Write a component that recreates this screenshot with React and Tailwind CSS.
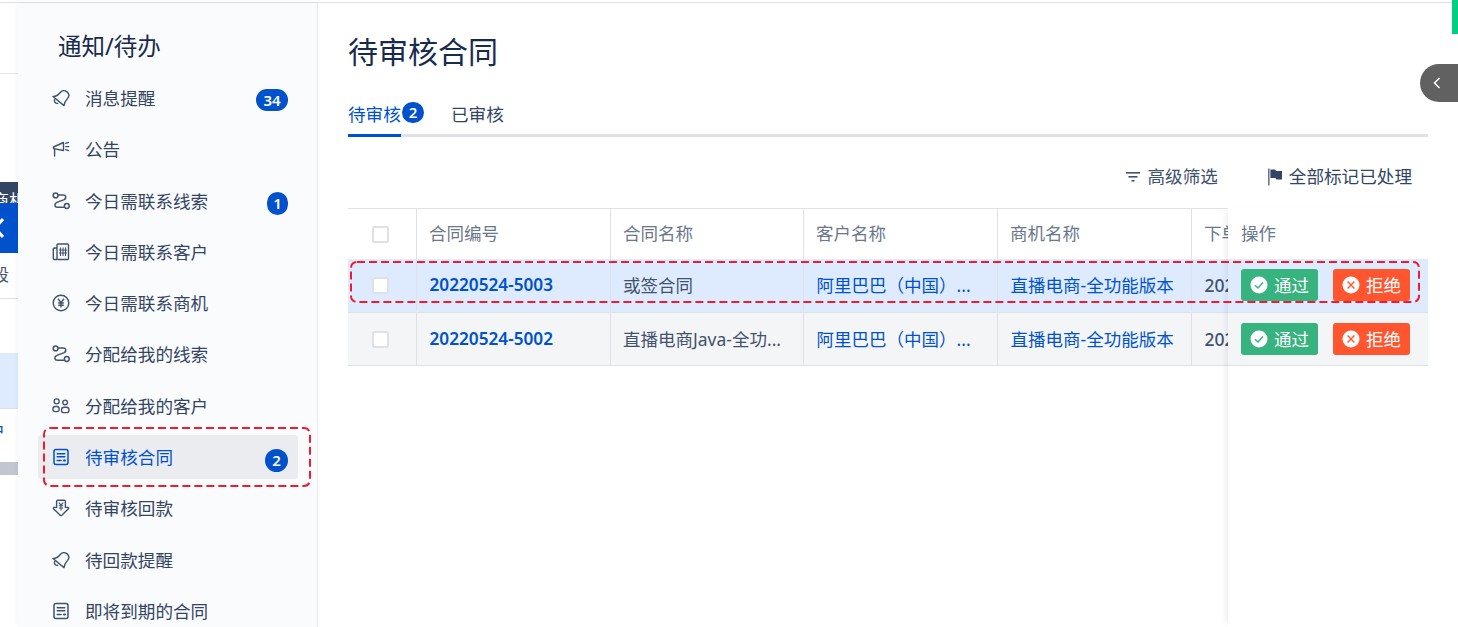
import React from 'react';

const FONT = "font-['Noto_Sans','Noto_Sans_CJK_SC',sans-serif]";

// Sidebar icons are drawn to match the reference's thin-line set
const BellIcon = ({ className }) => (
  <svg viewBox="0 0 18 18" className={className} fill="none" stroke="currentColor" strokeWidth="1.4" strokeLinejoin="round" strokeLinecap="round">
    <path d="M1 7.5 C3.5 7.6 6 6.4 8 3.8 C9.6 1.6 12.6 1 14.8 2.6 C17 4.4 17.4 7.2 15.6 9.4 C13.6 11.6 12.2 13.6 12 16.6 Z" />
    <path d="M2.6 10.4 C1.8 12.6 3.2 14.6 5.8 14.4" />
  </svg>
);

const MegaphoneIcon = ({ className }) => (
  <svg viewBox="0 0 18 18" className={className} fill="none" stroke="currentColor" strokeWidth="1.4" strokeLinecap="round" strokeLinejoin="round">
    <path d="M1.5 7 L11.5 2.5 V10.5 L1.5 8.6 Z" />
    <path d="M2.6 9 V16" />
    <path d="M13.8 3.4 L16.4 2.4 M13.8 6.6 H16.8 M13.8 9.6 L16.4 10.6" />
  </svg>
);

const RouteIcon = ({ className }) => (
  <svg viewBox="0 0 18 18" className={className} fill="none" stroke="currentColor" strokeWidth="1.5">
    <circle cx="3.6" cy="3.4" r="2.4" />
    <circle cx="14.8" cy="14" r="2.4" />
    <path d="M6 3 H11 C14.2 3 14.8 6 12.2 7.6 L4.8 10.4 C2 11.8 2.4 15.2 5.6 15.2 H12.4" />
  </svg>
);

const BuildingIcon = ({ className }) => (
  <svg viewBox="0 0 18 18" className={className} fill="none" stroke="currentColor" strokeWidth="1.4">
    <rect x="5" y="1" width="11.5" height="15.5" rx="1" />
    <path d="M5 5 H2.5 C1.8 5 1.3 5.5 1.3 6.2 V15.3 C1.3 16 1.8 16.5 2.5 16.5 H5" />
    <path d="M8.5 4.5 V13 M11 4.5 V13 M13.5 4.5 V13 M7 7 H15 M7 10 H15" strokeWidth="1.1" />
  </svg>
);

const YenCircleIcon = ({ className }) => (
  <svg viewBox="0 0 18 18" className={className} fill="none" stroke="currentColor" strokeWidth="1.4">
    <circle cx="9" cy="9" r="7.8" />
    <path d="M6 4.8 L9 8.6 L12 4.8 M9 8.6 V13.5 M6.2 9 H11.8 M6.2 11.2 H11.8" />
  </svg>
);

const UsersIcon = ({ className }) => (
  <svg viewBox="0 0 20 18" className={className} fill="none" stroke="currentColor" strokeWidth="1.5">
    <circle cx="5.2" cy="3.8" r="2.8" />
    <circle cx="14.6" cy="5" r="2.6" />
    <rect x="1" y="9.6" width="7" height="5.6" rx="2.6" />
    <rect x="10.6" y="10.4" width="8.2" height="6" rx="2.8" />
  </svg>
);

const DocIcon = ({ className }) => (
  <svg viewBox="0 0 18 18" className={className} fill="none" stroke="currentColor" strokeWidth="1.5" strokeLinecap="round">
    <rect x="2" y="1.6" width="14" height="14.8" rx="2" />
    <path d="M5.2 5.8 H12.8 M5.2 8.8 H12.8 M5.2 12.4 H9" />
    <path d="M12 12.4 H13" strokeWidth="2" />
  </svg>
);

const YenDownIcon = ({ className }) => (
  <svg viewBox="0 0 18 18" className={className} fill="none" stroke="currentColor" strokeWidth="1.4" strokeLinejoin="round">
    <path d="M4.6 8.4 V2.6 C4.6 1.8 5.2 1.2 6 1.2 H12 C12.8 1.2 13.4 1.8 13.4 2.6 V8.4 H16 C16.8 8.4 17 9.2 16.4 9.8 L9.8 16.2 C9.3 16.7 8.7 16.7 8.2 16.2 L1.6 9.8 C1 9.2 1.2 8.4 2 8.4 Z" />
    <path d="M6.8 3.6 L9 6.2 L11.2 3.6 M9 6.2 V11.6 M6.8 6.8 H11.2 M6.8 9 H11.2" strokeWidth="1.1" />
  </svg>
);

const FilterIcon = () => (
  <svg viewBox="0 0 16 12" className="w-4 h-3 text-[#42526e]" fill="currentColor">
    <rect x="1" y="1" width="14" height="1.6" />
    <rect x="3.5" y="5" width="9" height="1.6" />
    <rect x="6.5" y="9" width="3" height="1.6" />
  </svg>
);

const FlagIcon = () => (
  <svg viewBox="0 0 16 18" className="w-4 h-[18px] text-[#344563]" fill="currentColor">
    <rect x="1" y="0.5" width="1.6" height="17" fill="#6b778c" />
    <path d="M3.4 1.5 H8 L9 3 H15 V11.5 H9.5 L8.5 10 H3.4 Z" />
  </svg>
);

const CheckBadge = () => (
  <svg viewBox="0 0 18 18" className="w-[18px] h-[18px] shrink-0">
    <circle cx="9" cy="9" r="8.5" fill="#fff" />
    <path d="M5 9.2 L8 12 L13 6.6" fill="none" stroke="#36b37e" strokeWidth="1.4" />
  </svg>
);

const CrossBadge = () => (
  <svg viewBox="0 0 18 18" className="w-[18px] h-[18px] shrink-0">
    <circle cx="9" cy="9" r="8.5" fill="#fff" />
    <path d="M5.6 5.6 L12.4 12.4 M12.4 5.6 L5.6 12.4" fill="none" stroke="#ff5630" strokeWidth="1.4" />
  </svg>
);

const Count = ({ value, className = '' }) => (
  <span className={`flex items-center justify-center rounded-full bg-[#0052cc] text-white font-semibold text-[15px] leading-none ${className}`}>
    {value}
  </span>
);

const menuItems = [
  { label: '消息提醒', Icon: BellIcon, badge: '34', badgeSize: 'w-[32px] h-[22px] mt-[4px]' },
  { label: '公告', Icon: MegaphoneIcon },
  { label: '今日需联系线索', Icon: RouteIcon, badge: '1', badgeSize: 'w-[21px] h-[23px] mt-[5px]' },
  { label: '今日需联系客户', Icon: BuildingIcon },
  { label: '今日需联系商机', Icon: YenCircleIcon },
  { label: '分配给我的线索', Icon: RouteIcon },
  { label: '分配给我的客户', Icon: UsersIcon },
  { label: '待审核合同', Icon: DocIcon, badge: '2', badgeSize: 'w-[23px] h-[23px] mt-[7px]', active: true },
  { label: '待审核回款', Icon: YenDownIcon },
  { label: '待回款提醒', Icon: BellIcon },
  { label: '即将到期的合同', Icon: DocIcon },
];

const rows = [
  { no: '20220524-5003', name: '或签合同', customer: '阿里巴巴（中国）...', biz: '直播电商-全功能版本', bg: 'bg-[#deebff]', h: 'h-[54px] pb-px' },
  { no: '20220524-5002', name: '直播电商Java-全功...', customer: '阿里巴巴（中国）...', biz: '直播电商-全功能版本', bg: 'bg-[#f4f5f7]', h: 'h-[53px]' },
];

const headers = ['合同编号', '合同名称', '客户名称', '商机名称', '下单时间'];
const widths = ['w-[194px]', 'w-[193px]', 'w-[194px]', 'w-[194px]', 'w-[200px]'];

const Checkbox = () => (
  <span className="block w-[17px] h-[17px] rounded-[2px] border-2 border-[#dfe1e6] bg-white" />
);

const DashedBox = ({ className, w, h }) => (
  <svg className={`absolute ${className}`} width={w} height={h} fill="none">
    <rect x="1" y="1" width={w - 2} height={h - 2} rx="6" stroke="#ee1c2e" strokeWidth="2" strokeDasharray="8 4" />
  </svg>
);

const LeftPeek = () => (
  <div className="w-[18px] shrink-0 h-full flex flex-col bg-white overflow-hidden">
    <div className="h-[71px] border-b border-[#e5e6eb] shrink-0" />
    <div className="h-[108px] shrink-0" />
    <div className="h-[21px] bg-[#344563] shrink-0 text-white text-[17px] leading-[38px] -indent-2 whitespace-nowrap overflow-hidden">商机</div>
    <div className="h-[50px] bg-[#0052cc] shrink-0 flex items-center">
      <svg viewBox="0 0 11 20" className="w-[11px] h-5 text-white -ml-[7px] shrink-0" fill="none" stroke="currentColor" strokeWidth="3">
        <path d="M10 1 L2 10 L10 19" />
      </svg>
    </div>
    <div className="h-[46px] shrink-0 border-b border-[#dfe1e6] text-[#42526e] text-[17px] leading-[44px] -indent-2">段</div>
    <div className="h-[54px] shrink-0" />
    <div className="h-[56px] bg-[#deebff] border-b border-[#dfe1e6] shrink-0" />
    <div className="h-[53px] shrink-0 text-[#0052cc] text-[17px] leading-[46px] -indent-3">户</div>
    <div className="h-[13px] bg-[#c1c7d0] shrink-0" />
  </div>
);

const Sidebar = () => (
  <aside className="w-[300px] shrink-0 h-full bg-[#fafbfd] border-r border-[#ebecf0] shadow-[0_0_6px_rgba(9,30,66,0.06)] overflow-hidden">
    <h2 className="pl-[40px] pt-[26px] h-[73px] text-[23.5px] leading-[34px] text-[#172b4d]">通知/待办</h2>
    <ul className="pl-[20px] pr-[19px] flex flex-col gap-[7.3px]">
      {menuItems.map(({ label, Icon, badge, badgeSize, active }) => (
        <li
          key={label}
          className={`h-[44px] shrink-0 flex items-center pl-[14px] pr-[10px] rounded-[4px] ${active ? 'bg-[#ebecf0] text-[#0052cc]' : 'text-[#344563]'}`}
        >
          <Icon className={`w-[18px] h-[18px] shrink-0 ${active ? 'text-[#0052cc]' : 'text-[#42526e]'}`} />
          <span className="ml-[15px] flex-1 text-[17.6px] leading-6 whitespace-nowrap">{label}</span>
          {badge && <Count value={badge} className={badgeSize} />}
        </li>
      ))}
    </ul>
  </aside>
);

const ActionColumn = () => (
  <div className="absolute top-[205px] right-[30px] bottom-0 w-[200px] bg-white shadow-[-6px_0_6px_-4px_rgba(9,30,66,0.08)]">
    <div className="h-[51px] flex items-center pl-[13px] text-[17.5px] text-[#6b778c]">操作</div>
    {rows.map((row) => (
      <div key={row.no} className={`${row.h} ${row.bg} border-b border-[#dfe1e6] flex items-center gap-[15px] pl-[13px]`}>
        <button className="h-8 w-[77px] rounded-[3px] bg-[#36b37e] text-white text-[17.5px] flex items-center justify-center gap-[6px]">
          <CheckBadge />通过
        </button>
        <button className="h-8 w-[77px] rounded-[3px] bg-[#ff5630] text-white text-[17.5px] flex items-center justify-center gap-[6px]">
          <CrossBadge />拒绝
        </button>
      </div>
    ))}
  </div>
);

const Main = () => (
  <main className="relative flex-1 h-full pl-[30px] pr-[30px] overflow-hidden bg-white">
    <h1 className="pt-[27px] h-[86px] text-[30px] leading-[44px] text-[#172b4d]">待审核合同</h1>

    <div className="flex h-[48px] border-b-[3px] border-[#dfe1e6] text-[17.6px]">
      <div className="relative h-[48px] w-[53px] border-b-[3px] border-[#0052cc] text-[#0052cc] leading-[50px] whitespace-nowrap">
        待审核
        <Count value="2" className="absolute left-[54px] top-[13px] w-[22px] h-[21px]" />
      </div>
      <div className="ml-[50px] text-[#344563] leading-[50px]">已审核</div>
    </div>

    <div className="h-[71px] pt-[8px] flex items-center justify-end pr-[16px] text-[17.6px] text-[#42526e]">
      <FilterIcon />
      <span className="ml-[6px]">高级筛选</span>
      <span className="ml-[49px]"><FlagIcon /></span>
      <span className="ml-[6px] text-[#344563]">全部标记已处理</span>
    </div>

    <div className="border-t border-[#dfe1e6] overflow-hidden">
      <div className="flex h-[50px] text-[17.5px] text-[#6b778c]">
        <div className="w-[69px] shrink-0 flex items-center justify-center border-r border-[#dfe1e6] pr-[4px]"><Checkbox /></div>
        {headers.map((text, i) => (
          <div key={text} className={`${widths[i]} shrink-0 flex items-center pl-[12px] pb-[2px] border-r border-[#dfe1e6] whitespace-nowrap`}>
            {text}
          </div>
        ))}
      </div>
      {rows.map((row) => (
        <div key={row.no} className={`flex ${row.h} ${row.bg} border-b border-[#dfe1e6] text-[17.5px]`}>
          <div className="w-[69px] shrink-0 flex items-center justify-center border-r border-[#dfe1e6] pr-[4px]"><Checkbox /></div>
          <div className={`${widths[0]} shrink-0 flex items-center pl-[12.5px] border-r border-[#dfe1e6] text-[#0052cc] font-semibold text-[17.2px]`}>{row.no}</div>
          <div className={`${widths[1]} shrink-0 flex items-center pl-[12px] border-r border-[#dfe1e6] text-[#42526e] whitespace-nowrap`}>{row.name}</div>
          <div className={`${widths[2]} shrink-0 flex items-center pl-[12.5px] border-r border-[#dfe1e6] text-[#0052cc] whitespace-nowrap`}>{row.customer}</div>
          <div className={`${widths[3]} shrink-0 flex items-center pl-[12.5px] border-r border-[#dfe1e6] text-[#0052cc] whitespace-nowrap`}>{row.biz}</div>
          <div className={`${widths[4]} shrink-0 flex items-center pl-[12.5px] text-[#42526e] font-medium`}>2022-05-24</div>
        </div>
      ))}
    </div>

    <ActionColumn />
  </main>
);

const App = () => (
  <div className={`relative w-[1458px] h-[627px] overflow-hidden bg-white ${FONT}`}>
    <div className="h-[3px] border-b border-[#dfe1e6] bg-white" />
    <div className="flex h-[624px]">
      <LeftPeek />
      <Sidebar />
      <Main />
    </div>

    {/* annotation boxes drawn over the screenshot */}
    <DashedBox className="left-[43px] top-[427px]" w={268} h={60} />
    <DashedBox className="left-[350px] top-[261px]" w={1070} h={42} />

    {/* floating widgets at the window edge */}
    <div className="absolute right-0 top-0 w-[6px] h-[34px] bg-[#00d084]" />
    <div className="absolute right-0 top-[64px] w-[38px] h-[38px] rounded-l-[19px] bg-[#616161] flex items-center pl-[13px]">
      <svg viewBox="0 0 8 12" className="w-2 h-3 text-white" fill="none" stroke="currentColor" strokeWidth="1.5">
        <path d="M6.5 1 L1.5 6 L6.5 11" />
      </svg>
    </div>
  </div>
);

export default App;
